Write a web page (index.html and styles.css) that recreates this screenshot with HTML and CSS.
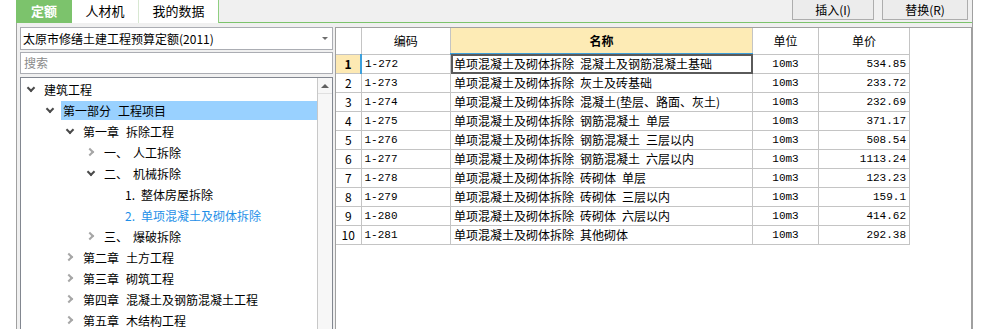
FILE: index.html
```html
<!DOCTYPE html>
<html lang="zh">
<head>
    <meta charset="UTF-8">
    <title>定额</title>
    <link rel="stylesheet" href="styles.css">
</head>
<body>

<div class="app">
    <div class="topbar">
        <div class="tabs">
            <div class="tab active">定额</div>
            <div class="tab">人材机</div>
            <div class="tab last">我的数据</div>
        </div>
        <div class="toolbar">
            <button class="btn insert">插入(I)</button>
            <button class="btn replace">替换(R)</button>
        </div>
    </div>

    <div class="main">
        <div class="left">
            <div class="combo">
                <span>太原市修缮土建工程预算定额(2011)</span>
                <span class="combo-arrow"></span>
            </div>
            <div class="search">搜索</div>
            <div class="tree">
                <div class="tree-list">
                    <div class="node l0"><span class="chev open"></span><span class="label">建筑工程</span></div>
                    <div class="node l1"><span class="chev open"></span><span class="label selected">第一部分<i class="sp"></i>工程项目</span></div>
                    <div class="node l2"><span class="chev open"></span><span class="label">第一章<i class="sp"></i>拆除工程</span></div>
                    <div class="node l3"><span class="chev closed"></span><span class="label">一、<i class="sp2"></i>人工拆除</span></div>
                    <div class="node l3"><span class="chev open"></span><span class="label">二、<i class="sp2"></i>机械拆除</span></div>
                    <div class="node l4"><span class="chev"></span><span class="label">1.<i class="sp3"></i>整体房屋拆除</span></div>
                    <div class="node l4"><span class="chev"></span><span class="label active">2.<i class="sp3"></i>单项混凝土及砌体拆除</span></div>
                    <div class="node l3"><span class="chev closed"></span><span class="label">三、<i class="sp2"></i>爆破拆除</span></div>
                    <div class="node l2"><span class="chev closed"></span><span class="label">第二章<i class="sp"></i>土方工程</span></div>
                    <div class="node l2"><span class="chev closed"></span><span class="label">第三章<i class="sp"></i>砌筑工程</span></div>
                    <div class="node l2"><span class="chev closed"></span><span class="label">第四章<i class="sp"></i>混凝土及钢筋混凝土工程</span></div>
                    <div class="node l2"><span class="chev closed"></span><span class="label">第五章<i class="sp"></i>木结构工程</span></div>
                </div>
                <div class="scrollbar">
                    <div class="scroll-up"><span class="tri"></span></div>
                </div>
            </div>
        </div>

        <div class="right">
            <table class="grid">
                <thead>
                    <tr>
                        <th class="c-no"></th>
                        <th class="c-code">编码</th>
                        <th class="c-name focus">名称</th>
                        <th class="c-unit">单位</th>
                        <th class="c-price">单价</th>
                    </tr>
                </thead>
                <tbody id="rows"></tbody>
            </table>
        </div>
    </div>
</div>

<script>
    const rows = [
        ['1-272', '混凝土及钢筋混凝土基础', '534.85'],
        ['1-273', '灰土及砖基础', '233.72'],
        ['1-274', '混凝土(垫层、路面、灰土)', '232.69'],
        ['1-275', '钢筋混凝土 单层', '371.17'],
        ['1-276', '钢筋混凝土 三层以内', '508.54'],
        ['1-277', '钢筋混凝土 六层以内', '1113.24'],
        ['1-278', '砖砌体 单层', '123.23'],
        ['1-279', '砖砌体 三层以内', '159.1'],
        ['1-280', '砖砌体 六层以内', '414.62'],
        ['1-281', '其他砌体', '292.38']
    ];
    const tbody = document.getElementById('rows');

    rows.forEach((row, i) => {
        const tr = document.createElement('tr');
        if (i === 0) tr.className = 'current';
        const name = '单项混凝土及砌体拆除 ' + row[1];
        tr.innerHTML =
            '<td class="c-no">' + (i + 1) + '</td>' +
            '<td class="c-code">' + row[0] + '</td>' +
            '<td class="c-name">' + name.replace(/ /g, '&ensp;') + '</td>' +
            '<td class="c-unit">10m3</td>' +
            '<td class="c-price">' + row[2] + '</td>';
        tbody.appendChild(tr);
    });
</script>

</body>
</html>
```

FILE: styles.css
```css
body {
    margin: 0;
    background: #ffffff;
    font-family: "Noto Sans CJK SC", "Liberation Sans", sans-serif;
    font-size: 12px;
    color: #000000;
    overflow: hidden;
}
.app {
    margin-left: 16px;
    width: 956px;
    height: 329px;
    background: #f0f0f0;
    border-right: 1px solid #a0a0a0;
}
.topbar {
    display: flex;
    height: 23px;
    background: #f0f0f0;
}
.tabs {
    display: flex;
    height: 23px;
    background: #ffffff;
}
.tab {
    height: 23px;
    line-height: 22px;
    text-align: center;
    font-size: 13px;
    background: #ffffff;
    border-right: 1px solid #d8e8d2;
}
.tab.active {
    width: 56px;
    background: #7cc36c;
    color: #ffffff;
    font-weight: bold;
    border-right: none;
}
.tab:nth-child(2) {
    width: 66px;
}
.tab.last {
    width: 79px;
    border-right: 1px solid #8fcf80;
}
.toolbar {
    flex: 1;
    display: flex;
    justify-content: flex-end;
    gap: 8px;
    padding-right: 4px;
    border-bottom: 1px solid #7cc36c;
}
.btn {
    height: 20px;
    padding: 0;
    font-family: inherit;
    font-size: 12px;
    background: #ececec;
    border: 1px solid #adadad;
    border-top: none;
}
.btn.insert {
    width: 82px;
}
.btn.replace {
    width: 86px;
}
.main {
    display: flex;
    height: 306px;
    padding-top: 4px;
}
.left {
    width: 313px;
    padding: 0 1px 0 3px;
    border-left: 1px solid #a0a0a0;
    margin-top: -4px;
    padding-top: 4px;
}
.combo {
    display: flex;
    justify-content: space-between;
    align-items: center;
    height: 21px;
    padding: 0 4px 0 2px;
    background: #ffffff;
    border: 1px solid #abadb3;
}
.combo-arrow {
    width: 0;
    height: 0;
    border-left: 3px solid transparent;
    border-right: 3px solid transparent;
    border-top: 3px solid #6d6d6d;
}
.search {
    height: 20px;
    line-height: 20px;
    margin-top: 2px;
    padding-left: 3px;
    background: #ffffff;
    border: 1px solid #abadb3;
    color: #8a8a8a;
}
.tree {
    display: flex;
    height: 260px;
    margin-top: 3px;
    background: #ffffff;
    border: 1px solid #828790;
    border-bottom: none;
}
.tree-list {
    flex: 1;
    padding-top: 1px;
}
.node {
    display: flex;
    align-items: center;
    height: 21px;
    white-space: nowrap;
}
.node.l0 { padding-left: 2px; }
.node.l1 { padding-left: 21px; }
.node.l2 { padding-left: 41px; }
.node.l3 { padding-left: 62px; }
.node.l4 { padding-left: 83px; }
.chev {
    position: relative;
    width: 16px;
    height: 21px;
    flex-shrink: 0;
}
.chev.open::before {
    content: "";
    position: absolute;
    left: 5px;
    top: 6px;
    width: 4px;
    height: 4px;
    border-right: 2px solid #4a4a4a;
    border-bottom: 2px solid #4a4a4a;
    transform: rotate(45deg);
}
.chev.closed::before {
    content: "";
    position: absolute;
    left: 4px;
    top: 7px;
    width: 4px;
    height: 4px;
    border-right: 2px solid #a6a6a6;
    border-bottom: 2px solid #a6a6a6;
    transform: rotate(-45deg);
}
.label {
    margin-left: 4px;
    padding-left: 1px;
    height: 19px;
    line-height: 19px;
}
.label.selected {
    flex: 1;
    margin-left: 3px;
    padding-left: 2px;
    background: #99d1ff;
}
.label.active {
    color: #1e8fe8;
}
.sp {
    display: inline-block;
    width: 7px;
}
.sp2 {
    display: inline-block;
    width: 5px;
}
.sp3 {
    display: inline-block;
    width: 6px;
}
.scrollbar {
    width: 14px;
    background: #f7f7f7;
    border-left: 1px solid #c8c8c8;
}
.scroll-up {
    display: flex;
    justify-content: center;
    align-items: center;
    height: 15px;
    border-bottom: 1px solid #e0e0e0;
}
.tri {
    width: 0;
    height: 0;
    border-left: 4px solid transparent;
    border-right: 4px solid transparent;
    border-bottom: 4px solid #606060;
}
.right {
    width: 635px;
    height: 302px;
    margin-left: 1px;
    background: #ffffff;
    border: 1px solid #a0a0a0;
    border-bottom: none;
}
.grid {
    border-collapse: collapse;
    table-layout: fixed;
    font-size: 12px;
}
.grid th,
.grid td {
    padding: 0 3px;
    border: 1px solid #c4c4c4;
    white-space: nowrap;
    overflow: hidden;
}
.grid tr:first-child th {
    border-top: none;
}
.grid th:first-child,
.grid td:first-child {
    border-left: none;
}
.grid th {
    height: 25px;
    font-weight: normal;
    text-align: center;
}
.grid th.focus {
    background: #fdebb5;
    font-weight: bold;
    border-bottom: 2px solid #3ca0dc;
}
.grid td {
    height: 18px;
    line-height: 18px;
}
.c-no { width: 18px; text-align: center; }
.c-code { width: 82px; }
.c-name { width: 295px; }
.c-unit { width: 59px; text-align: center; }
.c-price { width: 84px; text-align: right; }
.grid td.c-unit,
.grid td.c-price,
.grid td.c-code {
    font-family: "Liberation Mono", "Noto Sans CJK SC", monospace;
    font-size: 11px;
}
.grid tr.current td.c-no {
    background: #fde9b3;
    font-weight: bold;
    border-right: 2px solid #3ca0dc;
}
.grid tr.current td.c-name {
    outline: 2px solid #5a5a5a;
    outline-offset: -2px;
}
```
